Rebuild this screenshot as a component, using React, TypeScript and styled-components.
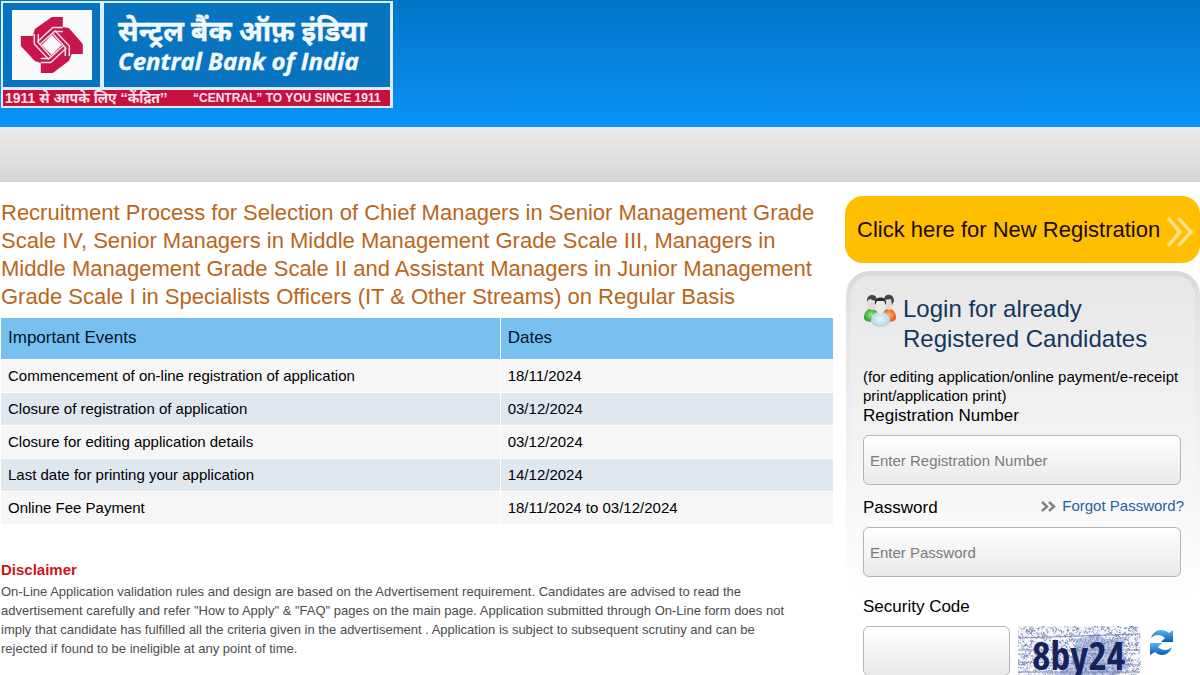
import React from "react";
import styled, { createGlobalStyle } from "styled-components";

const GlobalStyle = createGlobalStyle`
  *, *::before, *::after { box-sizing: border-box; }
  body { margin: 0; background: #fff; color: #000; font-family: "Liberation Sans", Arial, sans-serif; }
`;

const Header = styled.header`
  height: 127px;
  background: linear-gradient(#0074c4, #0a93f9);
`;
const Logo = styled.svg`
  display: block;
`;
const NavBar = styled.nav`
  height: 55px;
  background: linear-gradient(#ebebeb, #d6d6d6);
  border-bottom: 1px solid #cfcfcf;
`;
const Page = styled.main`
  display: grid;
  grid-template-columns: minmax(0, 1fr) 355px;
  gap: 12px;
`;
const Content = styled.section`
  padding: 17px 0 0 1px;
`;
const Title = styled.h1`
  margin: 0;
  padding-right: 16px;
  color: #b9661c;
  font-size: 22px;
  line-height: 28px;
  font-weight: 400;
`;
const Events = styled.table`
  width: 100%;
  margin-top: 7px;
  table-layout: fixed;
  border-collapse: collapse;
`;
const HeadCell = styled.th<{ $width: string }>`
  width: ${(p) => p.$width};
  height: 41px;
  padding: 0 7px;
  background: #78c0f0;
  color: #001428;
  font-size: 17px;
  font-weight: 400;
  text-align: left;
  & + & { border-left: 1px solid #fff; }
`;
const Row = styled.tr`
  background: #f6f6f6;
  &:nth-child(even) { background: #dfe7ef; }
`;
const Cell = styled.td`
  height: 33px;
  padding: 0 7px;
  font-size: 15px;
  border-top: 1px solid #fff;
  & + & { border-left: 1px solid #fff; }
`;
const Disclaimer = styled.section`
  margin-top: 34px;
`;
const DisclaimerTitle = styled.h2`
  margin: 0;
  color: #cf1419;
  font-size: 15px;
  line-height: 24px;
`;
const DisclaimerText = styled.p`
  margin: 0;
  padding-right: 32px;
  color: #4c4c4c;
  font-size: 13px;
  line-height: 19px;
`;
const Sidebar = styled.aside`
  padding-top: 14px;
`;
const RegisterButton = styled.button`
  display: flex;
  align-items: center;
  justify-content: space-between;
  width: 100%;
  height: 67px;
  padding: 0 6px 0 12px;
  border: 0;
  border-radius: 18px;
  background: #ffbf00;
  color: #1c0c00;
  font-family: inherit;
  font-size: 22px;
  white-space: nowrap;
`;
const LoginPanel = styled.form`
  margin: 8px 0 0 1px;
  padding: 18px 13px 0 12px;
  border: 5px solid transparent;
  border-bottom: 0;
  border-radius: 24px 24px 0 0;
  background:
    linear-gradient(#e7e7e7, #fff 330px) padding-box,
    linear-gradient(#d8d8d8, #e4e4e4 40px, #fff 320px) border-box;
`;
const LoginHeading = styled.div`
  display: flex;
  gap: 6px;
`;
const LoginTitle = styled.h2`
  margin: 0;
  color: #12375f;
  font-size: 24px;
  line-height: 30px;
  font-weight: 400;
`;
const Note = styled.p`
  margin: 13px 0 0;
  font-size: 15px;
  line-height: 19px;
`;
const LabelRow = styled.div<{ $top?: number }>`
  display: flex;
  align-items: center;
  justify-content: space-between;
  height: 22px;
  margin-top: ${(p) => p.$top ?? 0}px;
`;
const Label = styled.label`
  font-size: 17px;
`;
const Forgot = styled.a`
  display: flex;
  align-items: center;
  gap: 6px;
  margin-right: -2px;
  color: #1b629e;
  font-size: 15px;
  line-height: 18px;
  padding-bottom: 4px;
  text-decoration: none;
`;
const Field = styled.input`
  display: block;
  width: 318px;
  max-width: 100%;
  height: 50px;
  padding: 0 6px;
  border: 1px solid #b4b4b4;
  border-radius: 6px;
  background: linear-gradient(#fff, #e9e9e9);
  font-family: inherit;
  font-size: 15px;
  &::placeholder { color: #7b7b7b; opacity: 1; }
`;
const FieldSlot = styled.div`
  margin-top: 8px;
`;
const CaptchaRow = styled.div`
  display: grid;
  grid-template-columns: 147px 123px 25px;
  gap: 8px;
  margin-top: 8px;
`;
const RefreshButton = styled.button`
  height: 36px;
  padding: 0;
  border: 0;
  background: none;
`;
const PeopleDrawing = styled.svg`
  flex: none;
`;

const events = [
  ["Commencement of on-line registration of application", "18/11/2024"],
  ["Closure of registration of application", "03/12/2024"],
  ["Closure for editing application details", "03/12/2024"],
  ["Last date for printing your application", "14/12/2024"],
  ["Online Fee Payment", "18/11/2024 to 03/12/2024"],
];

function BankLogo() {
  return (
    <Logo width="394" height="109" viewBox="0 0 394 109" role="img" aria-label="Central Bank of India">
      <rect x="1" y="1" width="392" height="107" fill="#d9effc" />
      <rect x="3" y="3" width="387" height="84" fill="#0873be" />
      <rect x="100" y="3" width="4" height="84" fill="#d9effc" />
      <rect x="12" y="10" width="80" height="70" fill="#f8f9fb" />
      <g transform="translate(51.8 45)">
        <path d="M0-28H11V-18L17-17L31-1V9H20L17 16L1 28H-11V18L-17 16L-31 1V-9H-19L-17-16Z" fill="#c8164b" />
        <path d="M0-10L10 0L0 10L-10 0Z" fill="#f8f9fb" />
        {[0, 90, 180, 270].map((a) => (
          <path
            key={a}
            transform={`rotate(${a})`}
            d="M11-17.500H1L-14.500-3M11-13.500H2.500L-12-.5"
            fill="none"
            stroke="#f3dfe6"
            strokeWidth="1.5"
          />
        ))}
      </g>
      <g fill="#f2faff" stroke="#f2faff" strokeWidth=".4" fontWeight="700">
        <text x="118" y="41" fontSize="28" fontFamily='"Noto Sans", "Noto Sans Devanagari", sans-serif' lang="hi">
          सेन्ट्रल बैंक ऑफ़ इंडिया
        </text>
        <text x="118" y="70" fontSize="24" fontStyle="italic" fontFamily='"Open Sans", sans-serif'>
          Central Bank of India
        </text>
      </g>
      <rect x="3" y="90" width="387" height="16" fill="#c8103f" />
      <g fill="#fbe4eb" fontWeight="700" fontFamily='"Liberation Sans", "Noto Sans", sans-serif'>
        <text x="5" y="103" fontSize="14">1911 से आपके लिए ‘‘केंद्रित’’</text>
        <text x="193" y="102" fontSize="12">“CENTRAL” TO YOU SINCE 1911</text>
      </g>
    </Logo>
  );
}

function PeopleIcon() {
  return (
    <PeopleDrawing width="34" height="34" viewBox="0 0 34 34" aria-hidden="true">
      <defs>
        <radialGradient id="green"><stop offset="0" stopColor="#a2e37c" /><stop offset="1" stopColor="#2fa32b" /></radialGradient>
        <radialGradient id="orange"><stop offset="0" stopColor="#ffae70" /><stop offset="1" stopColor="#ec5a16" /></radialGradient>
        <radialGradient id="pale"><stop offset="0" stopColor="#e9f6fd" /><stop offset="1" stopColor="#b4d6e9" /></radialGradient>
      </defs>
      <path d="M1 24C1 18 4 15 9 14L15 18L12 27C7 29 1 27 1 24Z" fill="url(#green)" />
      <path d="M33 24C33 18 30 15 25 14L19 18L22 27C27 29 33 27 33 24Z" fill="url(#orange)" />
      <path d="M4.500 6C4 12 6 16 9.500 16S14 12 14 6L9 3Z" fill="#dedbd8" />
      <path d="M21 6C21 12 23 16 26 16S30 12 30 6L26 3Z" fill="#dedbd8" />
      <path d="M4 8C3-1 14-1 14 6L12 7L7 5L5 6Z M21 6C21-1 31-1 31 7L29 11L28 5Z" fill="#444" />
      <path d="M8 27C8 21 11 18 17 18S27 21 27 27C25 35 10 35 8 27Z" fill="url(#pale)" />
      <path d="M13 8C12 15 14 20 17.500 20S23 15 22 8Z" fill="#eceae8" />
      <path d="M12 11C10 1 25 1 23 11L21 7H14Z" fill="#292929" />
    </PeopleDrawing>
  );
}

function noise() {
  let seed = 7;
  const next = () => (seed = (seed * 16807) % 2147483647) / 2147483647;
  let d = "";
  for (let i = 0; i < 1500; i++) {
    d += `M${(next() * 122).toFixed(1)} ${(next() * 50).toFixed(1)}l${(next() * 4 - 2).toFixed(1)} ${(next() * 4 - 2).toFixed(1)}`;
  }
  return d;
}
const noisePath = noise();

function Captcha() {
  return (
    <svg width="123" height="50" viewBox="0 0 123 50" role="img" aria-label="Security code image">
      <rect width="123" height="50" fill="#f6f7fb" />
      <path d="M58 14L78 8L92 14L110 10L104 24L112 40L96 50H36L52 38Z" fill="#8596d2" opacity=".5" />
      <path d={noisePath} stroke="#6c7aa8" strokeWidth=".8" fill="none" />
      <path d="M0 12L122 8M0 24H122M0 36L122 39M0 46H122" stroke="#6c7cb8" strokeWidth=".8" />
      <text x="14" y="44" fontSize="40" fontWeight="700" fontFamily='"Open Sans Condensed", "DejaVu Sans Condensed", sans-serif' fill="#17235f">
        8by24
      </text>
    </svg>
  );
}

export default function App() {
  return (
    <>
      <GlobalStyle />
      <Header><BankLogo /></Header>
      <NavBar aria-label="Main" />
      <Page>
        <Content>
          <Title>
            Recruitment Process for Selection of Chief Managers in Senior Management Grade Scale IV, Senior Managers in
            Middle Management Grade Scale III, Managers in Middle Management Grade Scale II and Assistant Managers in
            Junior Management Grade Scale I in Specialists Officers (IT &amp; Other Streams) on Regular Basis
          </Title>
          <Events>
            <thead>
              <tr><HeadCell $width="60%">Important Events</HeadCell><HeadCell $width="40%">Dates</HeadCell></tr>
            </thead>
            <tbody>
              {events.map(([name, date]) => (
                <Row key={name}><Cell>{name}</Cell><Cell>{date}</Cell></Row>
              ))}
            </tbody>
          </Events>
          <Disclaimer>
            <DisclaimerTitle>Disclaimer</DisclaimerTitle>
            <DisclaimerText>
              On-Line Application validation rules and design are based on the Advertisement requirement. Candidates are
              advised to read the advertisement carefully and refer "How to Apply" &amp; "FAQ" pages on the main page.
              Application submitted through On-Line form does not imply that candidate has fulfilled all the criteria
              given in the advertisement . Application is subject to subsequent scrutiny and can be rejected if found to
              be ineligible at any point of time.
            </DisclaimerText>
          </Disclaimer>
        </Content>
        <Sidebar>
          <RegisterButton type="button">
            Click here for New Registration
            <svg width="28" height="34" viewBox="0 0 28 34" aria-hidden="true">
              <path d="M2 5L14 19L2 33M12 5L25 19L12 33" fill="none" stroke="#ffe08a" strokeWidth="3.500" />
            </svg>
          </RegisterButton>
          <LoginPanel>
            <LoginHeading>
              <PeopleIcon />
              <LoginTitle>Login for already Registered Candidates</LoginTitle>
            </LoginHeading>
            <Note>(for editing application/online payment/e-receipt print/application print)</Note>
            <LabelRow><Label htmlFor="reg">Registration Number</Label></LabelRow>
            <FieldSlot><Field id="reg" type="text" placeholder="Enter Registration Number" /></FieldSlot>
            <LabelRow $top={12}>
              <Label htmlFor="pwd">Password</Label>
              <Forgot href="#forgot">
                <svg width="15" height="11" viewBox="0 0 15 11" aria-hidden="true">
                  <path d="M1 1L6 5.500L1 10M8 1L13 5.500L8 10" fill="none" stroke="#828289" strokeWidth="2.500" />
                </svg>
                Forgot Password?
              </Forgot>
            </LabelRow>
            <FieldSlot><Field id="pwd" type="password" placeholder="Enter Password" /></FieldSlot>
            <LabelRow $top={19}><Label htmlFor="code">Security Code</Label></LabelRow>
            <CaptchaRow>
              <Field id="code" type="text" />
              <Captcha />
              <RefreshButton type="button" aria-label="Refresh security code">
                <svg width="25" height="30" viewBox="0 0 25 30" aria-hidden="true">
                  <defs>
                    <linearGradient id="blue" x2="0" y2="1">
                      <stop offset="0" stopColor="#54b7f2" />
                      <stop offset="1" stopColor="#0c58b5" />
                    </linearGradient>
                  </defs>
                  <path d="M2 10C5 1 14 0 20 5L24 2V14H12L16 10C12 6 6 6 2 10Z" fill="url(#blue)" />
                  <path d="M23 19C20 28 11 29 6 24L1 27V15H13L9 19C13 23 19 23 23 19Z" fill="url(#blue)" />
                </svg>
              </RefreshButton>
            </CaptchaRow>
          </LoginPanel>
        </Sidebar>
      </Page>
    </>
  );
}
